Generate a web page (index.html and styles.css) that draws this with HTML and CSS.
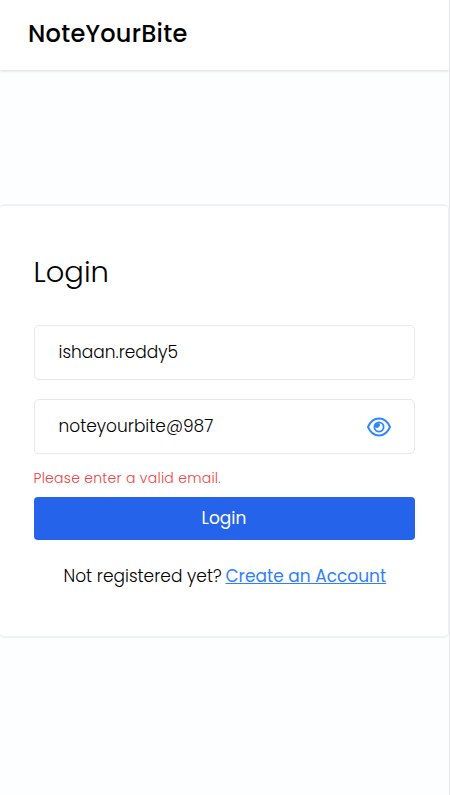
FILE: index.html
```html
<!DOCTYPE html>
<html lang="en">
<head>
<meta charset="utf-8">
<title>NoteYourBite</title>
<link rel="stylesheet" href="styles.css">
</head>
<body>
<header class="navbar"><h1 class="brand">NoteYourBite</h1></header>
<main class="content">
  <form class="card">
    <h2 class="title">Login</h2>
    <div class="field"><span class="email">ishaan.reddy5</span></div>
    <div class="field">
      <span class="password">noteyourbite@987</span>
      <svg class="eye" viewBox="0 0 24 20" fill="none" stroke="currentColor"><path stroke-width="1.900" stroke-linejoin="round" d="M1 10C3.500 4.300 7.400 1.500 12 1.500s8.500 2.800 11 8.500c-2.500 5.700-6.400 8.500-11 8.500S3.500 15.700 1 10z"/><circle cx="12" cy="10" r="4.600" stroke-width="1.800"/><path fill="currentColor" stroke="none" d="M12 6a2.700 2.700 0 0 1-4 4V6.500z"/></svg>
    </div>
    <p class="error">Please enter a valid email.</p>
    <button class="submit" type="button"><span>Login</span></button>
    <p class="signup"><span class="prompt">Not registered yet?</span><a class="link" href="#">Create an Account</a></p>
  </form>
</main>
</body>
</html>
```

FILE: styles.css
```css
* { box-sizing: border-box; }
body {
  margin: 0;
  height: 795px;
  display: flex;
  flex-direction: column;
  overflow: hidden;
  background: #fdfeff;
  border-right: 1px solid #e5e7eb;
  color: #000;
  font-family: Poppins, Inter, sans-serif;
  font-size: 17px;
  font-weight: 300;
}
h1, h2, p { margin: 0; }
.navbar {
  height: 70px;
  flex: none;
  display: flex;
  align-items: center;
  padding: 0 28px 3px;
  background: #fff;
  box-shadow: 0 1px 3px rgba(0, 0, 0, .15);
}
.brand { font-size: 24px; line-height: 32px; font-weight: 500; letter-spacing: .28px; }
.content { padding-top: 134px; }
.card {
  height: 434px;
  padding: 46px 33.500px 0;
  margin-left: -1px;
  background: #fff;
  border: 2px solid #eff1f4;
  border-width: 2px 1px;
  border-radius: 5px;
}
.title { font-size: 29px; line-height: 40px; font-weight: 300; margin-bottom: 33px; }
.field {
  width: 381px;
  height: 55px;
  display: flex;
  align-items: center;
  justify-content: space-between;
  padding: 0 23px 1px 24px;
  margin-bottom: 19px;
  border: 1px solid #e5e7eb;
  border-radius: 5px;
}
.eye { width: 24px; height: 20px; color: #2f86ff; position: relative; top: 1px; }
.error { font-size: 14px; line-height: 20px; letter-spacing: .26px; color: #ef4444; margin: -5px 0 9px; }
.submit {
  display: block;
  width: 381px;
  height: 43px;
  padding: 0 0 1px;
  border: 0;
  border-radius: 4px;
  background: #2563eb;
  color: #fff;
  font: 400 17px/24px Poppins, Inter, sans-serif;
}
.signup {
  display: flex;
  gap: 4px;
  padding-left: 30px;
  margin-top: 24px;
  line-height: 24px;
  white-space: nowrap;
}
.prompt { width: 158px; }
.link { font-weight: 400; color: #2f80ff; text-decoration: underline; }
```
